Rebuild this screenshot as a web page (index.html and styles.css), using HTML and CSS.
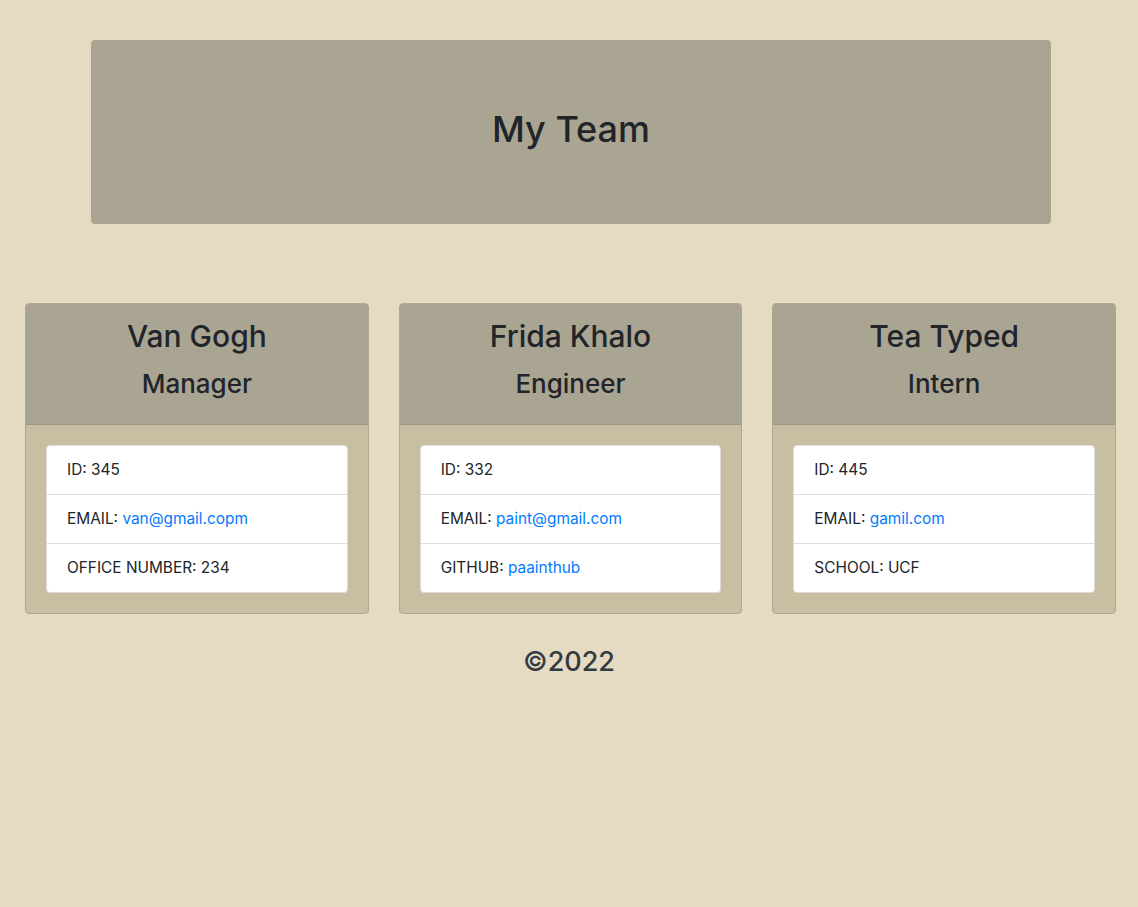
FILE: index.html
```html
<!DOCTYPE html>
<html lang="en">
<head>
<meta charset="utf-8">
<title>My Team</title>
<link rel="stylesheet" href="styles.css">
</head>
<body>
<header class="jumbotron">
  <h1 class="title">My Team</h1>
</header>
<main class="cards">
  <section class="card">
    <div class="card-header">
      <h2 class="name">Van Gogh</h2>
      <h3 class="role">Manager</h3>
    </div>
    <div class="card-body">
      <ul class="list">
        <li class="item">ID: 345</li>
        <li class="item">EMAIL: <a class="link" href="#">van@gmail.copm</a></li>
        <li class="item">OFFICE NUMBER: 234</li>
      </ul>
    </div>
  </section>
  <section class="card">
    <div class="card-header">
      <h2 class="name">Frida Khalo</h2>
      <h3 class="role">Engineer</h3>
    </div>
    <div class="card-body">
      <ul class="list">
        <li class="item">ID: 332</li>
        <li class="item">EMAIL: <a class="link" href="#">paint@gmail.com</a></li>
        <li class="item">GITHUB: <a class="link" href="#">paainthub</a></li>
      </ul>
    </div>
  </section>
  <section class="card">
    <div class="card-header">
      <h2 class="name">Tea Typed</h2>
      <h3 class="role">Intern</h3>
    </div>
    <div class="card-body">
      <ul class="list">
        <li class="item">ID: 445</li>
        <li class="item">EMAIL: <a class="link" href="#">gamil.com</a></li>
        <li class="item">SCHOOL: UCF</li>
      </ul>
    </div>
  </section>
</main>
<footer class="footer">©2022</footer>
</body>
</html>
```

FILE: styles.css
```css
* { box-sizing: border-box; }
html, body {
  margin: 0;
  padding: 0;
}
body {
  background: #e5dbc3;
  color: #212529;
  font-family: Inter, "Liberation Sans", sans-serif;
  font-size: 16px;
  line-height: 1.5;
}
.jumbotron {
  width: 960px;
  height: 184px;
  margin: 40px 0 0 91px;
  background: #aaa593;
  border-radius: 4px;
  display: flex;
  align-items: center;
  justify-content: center;
}
.title {
  margin: 0;
  font-size: 36px;
  font-weight: 500;
  line-height: 1.2;
  padding-bottom: 4px;
}
.cards {
  display: flex;
  gap: 30px;
  padding: 0 22px 0 25px;
  margin-top: 79px;
}
.card {
  flex: 1;
  border: 1px solid #b0a88d;
  border-radius: 4px;
  overflow: hidden;
  background: #c8bfa3;
}
.card-header {
  background: #aaa593;
  border-bottom: 1px solid #9c9683;
  text-align: center;
  padding: 14px 20px 25px;
}
.name {
  margin: 0 0 14px;
  font-size: 30px;
  font-weight: 500;
  line-height: 1.2;
}
.role {
  margin: 0;
  font-size: 26px;
  font-weight: 500;
  line-height: 1.2;
}
.card-body {
  padding: 20px;
}
.list {
  list-style: none;
  margin: 0;
  padding: 0;
  background: #fff;
  border: 1px solid #dcdcdc;
  border-radius: 4px;
}
.item {
  padding: 12px 20px;
  font-size: 15.4px;
  line-height: 24px;
  border-top: 1px solid #dcdcdc;
}
.item:first-child { border-top: 0; }
.link {
  color: #007bff;
  text-decoration: none;
}
.footer {
  text-align: center;
  font-size: 27px;
  font-weight: 500;
  line-height: 1.2;
  color: #343a40;
  margin-top: 32px;
}
```
